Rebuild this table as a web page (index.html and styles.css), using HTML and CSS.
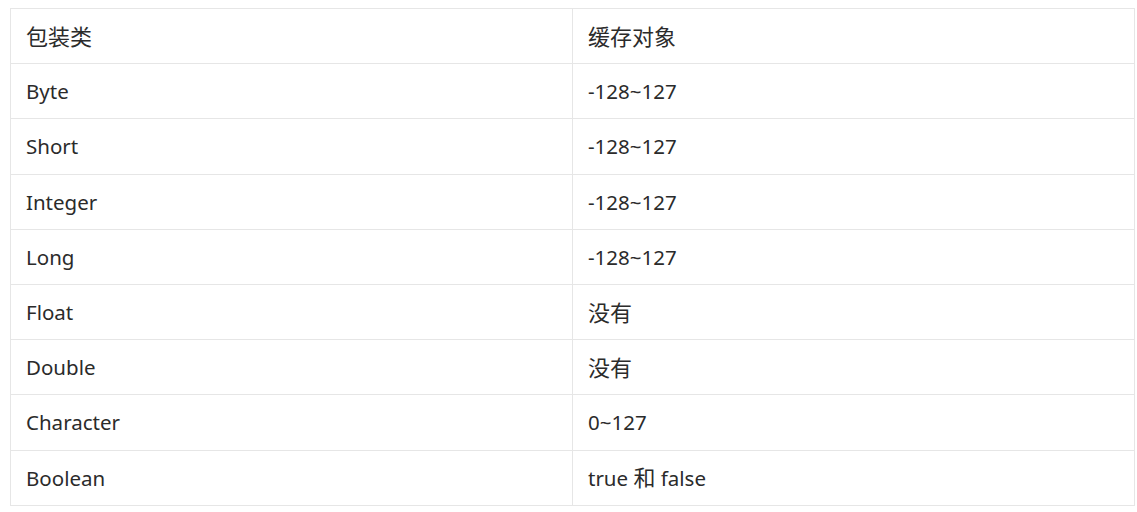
FILE: index.html
```html
<!DOCTYPE html>
<html lang="zh">
<head>
<meta charset="utf-8">
<link rel="stylesheet" href="styles.css">
</head>
<body>
<table class="tbl">
  <tr><td><span class="cjk">包装类</span></td><td><span class="cjk">缓存对象</span></td></tr>
  <tr><td>Byte</td><td>-128~127</td></tr>
  <tr><td>Short</td><td>-128~127</td></tr>
  <tr><td>Integer</td><td>-128~127</td></tr>
  <tr><td>Long</td><td>-128~127</td></tr>
  <tr><td>Float</td><td><span class="cjk">没有</span></td></tr>
  <tr><td>Double</td><td><span class="cjk">没有</span></td></tr>
  <tr><td>Character</td><td>0~127</td></tr>
  <tr><td>Boolean</td><td>true <span class="cjk">和</span> false</td></tr>
</table>
</body>
</html>
```
FILE: styles.css
```css
body {
  margin: 8px 0 0 10px;
  background: #fff;
  font-family: "Noto Sans", "Noto Sans CJK SC", sans-serif;
  color: #2b2b2b;
}
.tbl {
  width: 1125px;
  border-collapse: collapse;
  table-layout: fixed;
}
.tbl td {
  border: 1px solid #e6e6e6;
  height: 55.2px;
  box-sizing: border-box;
  padding: 0 15px;
  font-size: 20.5px;
  line-height: 28px;
  vertical-align: middle;
}
.cjk {
  font-size: 22px;
}
```
